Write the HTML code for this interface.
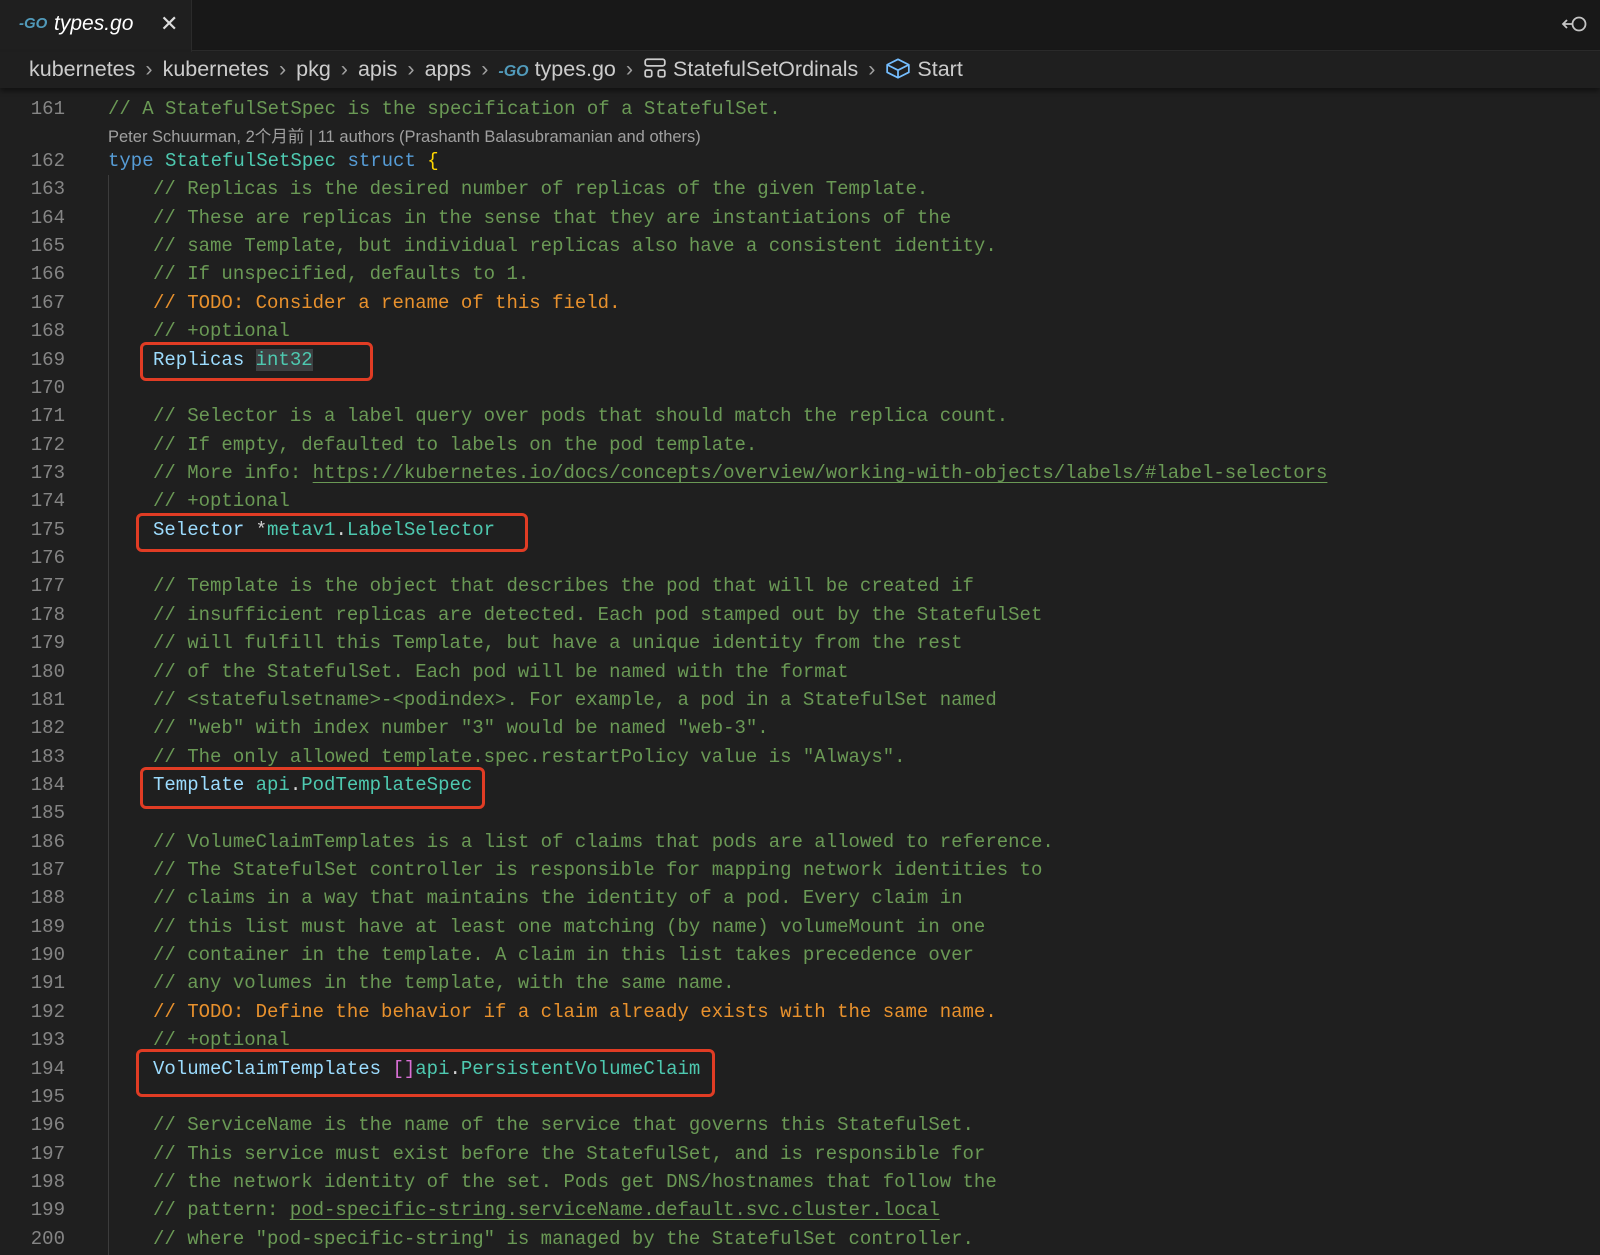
<!DOCTYPE html>
<html><head><meta charset="utf-8"><style>
*{margin:0;padding:0;box-sizing:border-box}
body{width:1600px;height:1250px;background:#1f1f1f;overflow:hidden;position:relative;font-family:"Liberation Mono",monospace}
.tabbar{position:absolute;left:0;top:0;width:1600px;height:51px;background:#181818;border-bottom:1px solid #2b2b2b}
.tab{position:absolute;left:0;top:0;width:192px;height:52px;background:#1f1f1f;border-right:1px solid #2b2b2b}
.sans{font-family:"Liberation Sans","Noto Sans CJK SC",sans-serif}
.crumb{position:absolute;left:29px;top:57px;height:28px;font-size:21.5px;color:#cccccc;white-space:nowrap}
.crumb .sep{color:#a0a0a0;margin:0 10px}
.crumbbar{position:absolute;left:0;top:52px;width:1600px;height:36px;background:#1f1f1f;box-shadow:0 3px 5px rgba(0,0,0,.45)}
.ln{position:absolute;left:0;width:65px;text-align:right;color:#858585;font-size:19px;line-height:28px}
.code{position:absolute;left:153px;font-size:19px;line-height:28px;color:#d4d4d4;white-space:pre}
.c{color:#6a9955}.t{color:#e8912d}.k{color:#569cd6}.ty{color:#4ec9b0}.v{color:#9cdcfe}.b{color:#ffd700}.p{color:#da70d6}
.u{text-decoration:underline;text-underline-offset:4px}
.guide{position:absolute;left:108px;top:175px;width:1px;height:1080px;background:#3c3c3c}
.box{position:absolute;border:3px solid #e03c24;border-radius:6px}
.hl{background:#3e4042}
</style></head><body>
<div class="tabbar"></div>
<div class="tab">
 <span style="position:absolute;left:19px;top:15px;font:italic bold 15px 'Liberation Sans',sans-serif;color:#519aba">-GO</span>
 <span class="sans" style="position:absolute;left:54px;top:12px;font-size:21px;font-style:italic;color:#ffffff">types.go</span>
 <span class="sans" style="position:absolute;left:160px;top:11px;font-size:22px;color:#dddddd">✕</span>
</div>
<svg style="position:absolute;left:1560px;top:12px" width="30" height="26" viewBox="0 0 30 26"><circle cx="19" cy="12" r="6.5" fill="none" stroke="#c5c5c5" stroke-width="1.8"/><path d="M12.5 12H3M7 8L3 12L7 16" fill="none" stroke="#c5c5c5" stroke-width="1.8"/></svg>
<div class="crumbbar"></div>
<div class="crumb sans">kubernetes<span class="sep">›</span>kubernetes<span class="sep">›</span>pkg<span class="sep">›</span>apis<span class="sep">›</span>apps<span class="sep">›</span><span style="font:italic bold 16px 'Liberation Sans',sans-serif;color:#519aba">-GO</span> types.go<span class="sep">›</span><svg width="24" height="22" viewBox="0 0 22 20" style="vertical-align:-3px"><rect x="2" y="2" width="18" height="6" rx="2" fill="none" stroke="#ccc" stroke-width="1.6"/><rect x="2" y="12" width="6" height="6" rx="1.5" fill="none" stroke="#ccc" stroke-width="1.6"/><rect x="14" y="12" width="6" height="6" rx="1.5" fill="none" stroke="#ccc" stroke-width="1.6"/></svg> StatefulSetOrdinals<span class="sep">›</span><svg width="26" height="22" viewBox="0 0 24 20" style="vertical-align:-3px"><path d="M2 7L12 2L22 7V14L12 19L2 14Z M2 7L12 12L22 7 M12 12V19" fill="none" stroke="#75beff" stroke-width="1.6" stroke-linejoin="round"/></svg> Start</div>
<div class="guide"></div>
<div class="ln" style="top:95px">161</div>
<div class="code" style="top:95px;left:108px"><span class="c">// A StatefulSetSpec is the specification of a StatefulSet.</span></div>
<div class="sans" style="position:absolute;left:108px;top:123px;font-size:16.5px;color:#a0a0a0;white-space:nowrap">Peter Schuurman, 2个月前 | 11 authors (Prashanth Balasubramanian and others)</div>

<div class="ln" style="top:147.0px">162</div><div class="code" style="top:147.0px;left:108px"><span class="k">type</span> <span class="ty">StatefulSetSpec</span> <span class="k">struct</span> <span class="b">{</span></div>
<div class="ln" style="top:175.4px">163</div><div class="code" style="top:175.4px"><span class="c">// Replicas is the desired number of replicas of the given Template.</span></div>
<div class="ln" style="top:203.7px">164</div><div class="code" style="top:203.7px"><span class="c">// These are replicas in the sense that they are instantiations of the</span></div>
<div class="ln" style="top:232.1px">165</div><div class="code" style="top:232.1px"><span class="c">// same Template, but individual replicas also have a consistent identity.</span></div>
<div class="ln" style="top:260.4px">166</div><div class="code" style="top:260.4px"><span class="c">// If unspecified, defaults to 1.</span></div>
<div class="ln" style="top:288.8px">167</div><div class="code" style="top:288.8px"><span class="t">// TODO: Consider a rename of this field.</span></div>
<div class="ln" style="top:317.2px">168</div><div class="code" style="top:317.2px"><span class="c">// +optional</span></div>
<div class="ln" style="top:345.5px">169</div><div class="code" style="top:345.5px"><span class="v">Replicas</span> <span class="ty hl">int32</span></div>
<div class="ln" style="top:373.9px">170</div>
<div class="ln" style="top:402.2px">171</div><div class="code" style="top:402.2px"><span class="c">// Selector is a label query over pods that should match the replica count.</span></div>
<div class="ln" style="top:430.6px">172</div><div class="code" style="top:430.6px"><span class="c">// If empty, defaulted to labels on the pod template.</span></div>
<div class="ln" style="top:459.0px">173</div><div class="code" style="top:459.0px"><span class="c">// More info: <span class="u">https://kubernetes.io/docs/concepts/overview/working-with-objects/labels/#label-selectors</span></span></div>
<div class="ln" style="top:487.3px">174</div><div class="code" style="top:487.3px"><span class="c">// +optional</span></div>
<div class="ln" style="top:515.7px">175</div><div class="code" style="top:515.7px"><span class="v">Selector</span> *<span class="ty">metav1</span>.<span class="ty">LabelSelector</span></div>
<div class="ln" style="top:544.0px">176</div>
<div class="ln" style="top:572.4px">177</div><div class="code" style="top:572.4px"><span class="c">// Template is the object that describes the pod that will be created if</span></div>
<div class="ln" style="top:600.8px">178</div><div class="code" style="top:600.8px"><span class="c">// insufficient replicas are detected. Each pod stamped out by the StatefulSet</span></div>
<div class="ln" style="top:629.1px">179</div><div class="code" style="top:629.1px"><span class="c">// will fulfill this Template, but have a unique identity from the rest</span></div>
<div class="ln" style="top:657.5px">180</div><div class="code" style="top:657.5px"><span class="c">// of the StatefulSet. Each pod will be named with the format</span></div>
<div class="ln" style="top:685.8px">181</div><div class="code" style="top:685.8px"><span class="c">// &lt;statefulsetname&gt;-&lt;podindex&gt;. For example, a pod in a StatefulSet named</span></div>
<div class="ln" style="top:714.2px">182</div><div class="code" style="top:714.2px"><span class="c">// "web" with index number "3" would be named "web-3".</span></div>
<div class="ln" style="top:742.6px">183</div><div class="code" style="top:742.6px"><span class="c">// The only allowed template.spec.restartPolicy value is "Always".</span></div>
<div class="ln" style="top:770.9px">184</div><div class="code" style="top:770.9px"><span class="v">Template</span> <span class="ty">api</span>.<span class="ty">PodTemplateSpec</span></div>
<div class="ln" style="top:799.3px">185</div>
<div class="ln" style="top:827.6px">186</div><div class="code" style="top:827.6px"><span class="c">// VolumeClaimTemplates is a list of claims that pods are allowed to reference.</span></div>
<div class="ln" style="top:856.0px">187</div><div class="code" style="top:856.0px"><span class="c">// The StatefulSet controller is responsible for mapping network identities to</span></div>
<div class="ln" style="top:884.4px">188</div><div class="code" style="top:884.4px"><span class="c">// claims in a way that maintains the identity of a pod. Every claim in</span></div>
<div class="ln" style="top:912.7px">189</div><div class="code" style="top:912.7px"><span class="c">// this list must have at least one matching (by name) volumeMount in one</span></div>
<div class="ln" style="top:941.1px">190</div><div class="code" style="top:941.1px"><span class="c">// container in the template. A claim in this list takes precedence over</span></div>
<div class="ln" style="top:969.4px">191</div><div class="code" style="top:969.4px"><span class="c">// any volumes in the template, with the same name.</span></div>
<div class="ln" style="top:997.8px">192</div><div class="code" style="top:997.8px"><span class="t">// TODO: Define the behavior if a claim already exists with the same name.</span></div>
<div class="ln" style="top:1026.2px">193</div><div class="code" style="top:1026.2px"><span class="c">// +optional</span></div>
<div class="ln" style="top:1054.5px">194</div><div class="code" style="top:1054.5px"><span class="v">VolumeClaimTemplates</span> <span class="p">[]</span><span class="ty">api</span>.<span class="ty">PersistentVolumeClaim</span></div>
<div class="ln" style="top:1082.9px">195</div>
<div class="ln" style="top:1111.2px">196</div><div class="code" style="top:1111.2px"><span class="c">// ServiceName is the name of the service that governs this StatefulSet.</span></div>
<div class="ln" style="top:1139.6px">197</div><div class="code" style="top:1139.6px"><span class="c">// This service must exist before the StatefulSet, and is responsible for</span></div>
<div class="ln" style="top:1168.0px">198</div><div class="code" style="top:1168.0px"><span class="c">// the network identity of the set. Pods get DNS/hostnames that follow the</span></div>
<div class="ln" style="top:1196.3px">199</div><div class="code" style="top:1196.3px"><span class="c">// pattern: <span class="u">pod-specific-string.serviceName.default.svc.cluster.local</span></span></div>
<div class="ln" style="top:1224.7px">200</div><div class="code" style="top:1224.7px"><span class="c">// where "pod-specific-string" is managed by the StatefulSet controller.</span></div>

<div class="box" style="left:140px;top:342px;width:233px;height:39px"></div>
<div class="box" style="left:136px;top:513px;width:392px;height:39px"></div>
<div class="box" style="left:140px;top:767px;width:345px;height:42px"></div>
<div class="box" style="left:136px;top:1049px;width:579px;height:48px"></div>
</body></html>
